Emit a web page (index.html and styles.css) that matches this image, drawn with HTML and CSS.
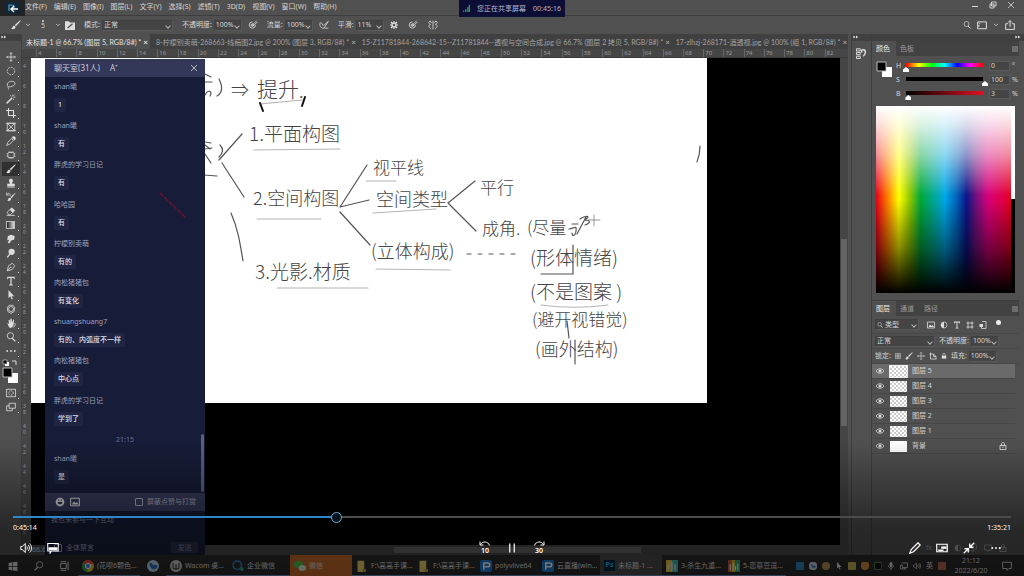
FILE: index.html
```html
<!DOCTYPE html>
<html lang="zh-CN">
<head>
<meta charset="utf-8">
<meta name="viewport" content="width=device-width, initial-scale=1">
<title>直播回放</title>
<link rel="stylesheet" href="styles.css">
</head>
<body>
<svg class="defs" aria-hidden="true">
  <symbol id="i-move" viewBox="0 0 16 16"><path d="M8 1v14M1 8h14M6 3l2-2 2 2M6 13l2 2 2-2M3 6L1 8l2 2M13 6l2 2-2 2"/></symbol>
  <symbol id="i-marquee" viewBox="0 0 16 16"><circle cx="8" cy="8" r="6" stroke-dasharray="3 1.5"/></symbol>
  <symbol id="i-lasso" viewBox="0 0 16 16"><path d="M4 11C-1 7 4 2 9 2c6 0 7 5 3 7-3 2-6 2-8 2-2 1 1 2 0 4"/></symbol>
  <symbol id="i-wand" viewBox="0 0 16 16"><path stroke-width="2.4" d="M1 15L10 6"/><path d="M11 1v3M15 5h-3M14 1l-2 2M7 2l1 2M13 9l-2-1"/></symbol>
  <symbol id="i-crop" viewBox="0 0 16 16"><path stroke-width="1.8" d="M4 0v12h12M0 4h12v12"/></symbol>
  <symbol id="i-frame" viewBox="0 0 16 16"><path d="M2 2h12v12H2zM2 2l12 12M14 2L2 14M0 2h16M0 14h16"/></symbol>
  <symbol id="i-dropper" viewBox="0 0 16 16"><path d="M1 15l2-5 6-6 3 3-6 6z"/><path class="fill" d="M9 2l5 5 2-4-3-3z"/></symbol>
  <symbol id="i-heal" viewBox="0 0 16 16"><rect x="3" y="4" width="10" height="8" rx="2"/><path d="M5 2v2M8 2v2M11 2v2M5 12v2M8 12v2M11 12v2M1 6h2M1 10h2M13 6h2M13 10h2"/></symbol>
  <symbol id="i-brush" viewBox="0 0 16 16"><path class="fill" d="M15 0L6 8l2 2 7-8zM5 9c-3 0-2 4-5 5 4 2 8 0 7-4z"/></symbol>
  <symbol id="i-stamp" viewBox="0 0 16 16"><path class="fill" d="M6 7C3 3 6 1 8 1s5 2 2 6v2h4v4H2V9h4zM2 14h12v1H2z"/></symbol>
  <symbol id="i-history" viewBox="0 0 16 16"><path class="fill" d="M15 1L7 8l2 2 6-8zM6 9c-3 0-2 4-4 5 3 1 7 0 6-4z"/><path d="M2 3c3-2 5 0 5 3M1 1v4h4"/></symbol>
  <symbol id="i-eraser" viewBox="0 0 16 16"><path d="M2 10l7-7 5 4-7 7H4zM1 15h13"/><path class="fill" d="M6 6l5 5 3-4-5-4z"/></symbol>
  <symbol id="i-smudge" viewBox="0 0 16 16"><path class="fill" d="M3 3l5-2 6 2-1 6-4 1-4 5-2-1 2-5-3 1z"/></symbol>
  <symbol id="i-dodge" viewBox="0 0 16 16"><circle class="fill" cx="9" cy="6" r="5"/><path stroke-width="2" d="M6 10l-4 5"/></symbol>
  <symbol id="i-pen" viewBox="0 0 16 16"><path d="M2 14l2-8 6-4 4 4-4 6zM2 14l6-6"/><circle class="fill" cx="8" cy="8" r="1"/></symbol>
  <symbol id="i-type" viewBox="0 0 16 16"><path class="fill" d="M2 1h12v4h-1l-1-2H9v10l2 1v1H5v-1l2-1V3H4L3 5H2z"/></symbol>
  <symbol id="i-arrow" viewBox="0 0 16 16"><path class="fill" d="M4 0v13l3-3 2 5 2-1-2-4h4z"/></symbol>
  <symbol id="i-shape" viewBox="0 0 16 16"><path d="M5 2h6l3 4-1 6-5 3-5-3-1-6z"/><circle cx="8" cy="8" r="4"/></symbol>
  <symbol id="i-hand" viewBox="0 0 16 16"><path class="fill" d="M2 8l3 1-1-6 2 0 1 4V1h2l1 6 2-5 1 1-1 9-4 4-3-1z"/><path d="M14 8c2 3 0 6-3 7"/></symbol>
  <symbol id="i-search" viewBox="0 0 16 16"><circle cx="7" cy="6" r="5"/><path stroke-width="2" d="M10 10l5 5"/></symbol>
  <symbol id="i-dots" viewBox="0 0 16 16"><circle class="fill" cx="2" cy="8" r="1.5"/><circle class="fill" cx="8" cy="8" r="1.5"/><circle class="fill" cx="14" cy="8" r="1.5"/></symbol>
  <symbol id="i-mask" viewBox="0 0 16 16"><rect x="1" y="2" width="14" height="12"/><circle cx="8" cy="8" r="3.5" stroke-dasharray="2 1"/></symbol>
  <symbol id="i-screens" viewBox="0 0 16 16"><path d="M5 2h10v8H5zM5 6H1v8h9v-4"/></symbol>
  <symbol id="i-down" viewBox="0 0 16 16"><path stroke-width="2" d="M3 5l5 5 5-5"/></symbol>
  <symbol id="i-brushbox" viewBox="0 0 16 16"><path class="fill" d="M0 2h6l2 2h8v12H0z"/><path stroke="#444" stroke-width="2" d="M4 13l8-7"/></symbol>
  <symbol id="i-pressure" viewBox="0 0 16 16"><path d="M12 8a5 5 0 1 1-5-5M6 9l8-8M6 9l3 0 6-6"/><circle cx="7" cy="8" r="2"/></symbol>
  <symbol id="i-airbrush" viewBox="0 0 16 16"><path d="M2 4c-2 5 1 10 6 9l7-11-8 7-4-5M9 13h6"/></symbol>
  <symbol id="i-gear" viewBox="0 0 16 16"><circle cx="8" cy="8" r="4" stroke-width="3"/><path stroke-width="2.4" d="M8 0v3M8 13v3M0 8h3M13 8h3M2 2l3 3M11 11l3 3M14 2l-3 3M5 11l-3 3"/></symbol>
  <symbol id="i-sym" viewBox="0 0 16 16"><path d="M8 1v14M5 2c-6 0-4 4-1 5-4 1-3 5 1 7M11 2c6 0 4 4 1 5 4 1 3 5-1 7M3 2l3 3M13 2l-3 3"/></symbol>
  <symbol id="i-workspace" viewBox="0 0 16 16"><path stroke-width="1.6" d="M1 3h14v11H1zM3 6h2M3 8v3"/></symbol>
  <symbol id="i-share" viewBox="0 0 16 16"><path stroke-width="1.6" d="M5 6H1v9h14V6h-4M8 11V1M5 4l3-3 3 3"/></symbol>
  <symbol id="i-min" viewBox="0 0 16 16"><path stroke-width="2" d="M2 11h12"/></symbol>
  <symbol id="i-restore" viewBox="0 0 16 16"><path stroke-width="1.8" d="M5 2h9v8H5zM2 6h8v8H2z"/></symbol>
  <symbol id="i-close" viewBox="0 0 16 16"><path stroke-width="1.6" d="M2 2l12 12M14 2L2 14"/></symbol>
  <symbol id="i-menu" viewBox="0 0 16 16"><path stroke-width="2" d="M2 4h12M2 8h12M2 12h12"/></symbol>
  <symbol id="i-chev" viewBox="0 0 16 16"><path class="fill" d="M1 4l6 4-6 4zM8 4l6 4-6 4z"/></symbol>
  <symbol id="i-panel" viewBox="0 0 16 16"><path d="M2 1h5v3H2zM2 6h5v3H2zM2 11h5v3H2z"/><path stroke-width="2" d="M10 2c5 0 5 5 1 9M9 2v4"/></symbol>
  <symbol id="i-image" viewBox="0 0 16 16"><path stroke-width="1.6" d="M1 2h14v12H1z"/><path class="fill" d="M3 12l3-5 3 3 2-2 3 4z"/></symbol>
  <symbol id="i-adjust" viewBox="0 0 16 16"><circle cx="8" cy="8" r="6"/><path class="fill" d="M8 2a6 6 0 0 0 0 12z"/></symbol>
  <symbol id="i-bounds" viewBox="0 0 16 16"><path stroke-width="1.6" d="M4 1v14M12 1v14M1 4h14M1 12h14"/></symbol>
  <symbol id="i-smart" viewBox="0 0 16 16"><path stroke-width="1.6" d="M6 1h8v14H5V8"/><path class="fill" d="M1 6h7v6H1z"/></symbol>
  <symbol id="i-checker" viewBox="0 0 16 16"><path d="M1 1h14v14H1zM1 6h14M1 10h14M6 1v14M10 1v14"/></symbol>
  <symbol id="i-artboard" viewBox="0 0 16 16"><path stroke-width="1.6" d="M3 1v13h12M1 4h8l5 5v5M9 4v5h5"/></symbol>
  <symbol id="i-lock" viewBox="0 0 16 16"><path stroke-width="1.8" d="M5 7V4c0-4 6-4 6 0v3"/><path class="fill" d="M2 7h12v8H2z"/></symbol>
  <symbol id="i-lockline" viewBox="0 0 16 16"><path stroke-width="1.8" d="M5 7V4c0-4 6-4 6 0v3M2 7h12v8H2zM8 9v3"/></symbol>
  <symbol id="i-eye" viewBox="0 0 16 16"><path stroke-width="1.6" d="M0 8c4-6 12-6 16 0-4 6-12 6-16 0z"/><circle class="fill" cx="8" cy="8" r="3"/></symbol>
  <symbol id="i-smile" viewBox="0 0 16 16"><circle class="fill" cx="8" cy="8" r="7"/><path fill="#2b2e4b" stroke="none" d="M4 8h8c-1 5-7 5-8 0zM5 4h2v2H5zM9 4h2v2H9z"/></symbol>
  <symbol id="i-volume" viewBox="0 0 16 16"><path d="M1 6h2l4-4v12l-4-4H1zM9 6c1 1 1 3 0 4M11 4c2 2 2 6 0 8M13 2c3 3 3 9 0 12"/></symbol>
  <symbol id="i-caption" viewBox="0 0 16 16"><path stroke-width="1.4" d="M1 2h14v10H6l-2 3v-3H1z"/><path class="fill" d="M2 7h12v4H2z"/></symbol>
  <symbol id="i-back" viewBox="0 0 24 12"><path stroke-width="2" d="M3 7c4-7 15-7 18 2M2 1v7h7"/></symbol>
  <symbol id="i-pause" viewBox="0 0 16 16"><path stroke-width="1.6" d="M5 2v12M11 2v12"/></symbol>
  <symbol id="i-pencil" viewBox="0 0 16 16"><path stroke-width="1.6" d="M1 15l2-5 9-9 3 3-9 9z"/></symbol>
  <symbol id="i-pip" viewBox="0 0 16 16"><path stroke-width="1.6" d="M1 3h14v10H1z"/><path class="fill" d="M7 6h7v3H7zM3 10h7v2H3z"/></symbol>
  <symbol id="i-shrink" viewBox="0 0 16 16"><path stroke-width="1.8" d="M15 1l-5 5M9 2v5h5M1 15l5-5M2 9h5v5"/></symbol>
  <symbol id="i-win" viewBox="0 0 16 16"><path class="fill" d="M1 3l6-1v6H1zM8 2l7-1v7H8zM1 9h6v6l-6-1zM8 9h7v7l-7-1z"/></symbol>
  <symbol id="i-taskview" viewBox="0 0 16 16"><path stroke-width="1.6" d="M1 4h9v8H1zM1 1h9M1 15h9M13 1v14"/></symbol>
  <symbol id="i-chrome" viewBox="0 0 16 16"><circle cx="8" cy="8" r="8" fill="#e8b92c"/><path fill="#dc4437" d="M8 8L1 4a8 8 0 0 1 14 0z"/><path fill="#2c9c52" d="M8 8L1 4a8 8 0 0 0 6 12z"/><circle cx="8" cy="8" r="3.6" fill="#4b86e4" stroke="#fff"/></symbol>
  <symbol id="i-bird" viewBox="0 0 16 16"><circle cx="8" cy="8" r="8" fill="#b9cfe6"/><path fill="#2b6fc0" d="M3 5c4-3 5 1 5 3 2-3 6-1 6 1-2 5-9 5-11-4z"/></symbol>
  <symbol id="i-wacom" viewBox="0 0 16 16"><circle cx="8" cy="8" r="8" fill="#c9c9c9"/><path stroke="#444" stroke-width="1.6" d="M4 4v5c0 4 4 4 4 0V5v4c0 4 4 4 4 0V4"/></symbol>
  <symbol id="i-wecom" viewBox="0 0 16 16"><circle cx="7" cy="7" r="5.6" stroke="#2e83cf" stroke-width="2"/><path stroke="#3bb08d" stroke-width="2" d="M11 12l4 2M13 10l2 2"/></symbol>
  <symbol id="i-wechat" viewBox="0 0 16 16"><ellipse cx="6" cy="6" rx="6" ry="5" fill="#49c34d"/><ellipse cx="11" cy="10.500" rx="5" ry="4" fill="#d8ead8"/></symbol>
  <symbol id="i-folder" viewBox="0 0 16 16"><path fill="#e8cf6f" d="M2 1h9v11h2v4H2z"/><path fill="#b59833" d="M9 12h4v4H9z"/></symbol>
  <symbol id="i-polyv" viewBox="0 0 16 16"><rect width="16" height="16" rx="3" fill="#1f7bd0"/><path stroke="#fff" stroke-width="2" d="M5 13V4h5c4 0 4 5 0 5H6"/></symbol>
  <symbol id="i-tiles" viewBox="0 0 16 16"><path fill="#e3c53e" d="M0 0h8v16H0z"/><path fill="#3fb6ae" d="M8 0h8v16H8z"/><path stroke="#eee" stroke-width="1.6" d="M3 14V7h3M8 14V3M12 14V6M3 4h2"/></symbol>
  <symbol id="i-tiles2" viewBox="0 0 16 16"><path fill="#c65b3b" d="M0 0h6v16H0z"/><path fill="#d7b83a" d="M5 0h5v16H5z"/><path fill="#33a872" d="M10 0h6v16h-6z"/><path stroke="#eee" stroke-width="1.6" d="M3 14V6M7 14V4M10 14V8M13 14V5"/></symbol>
  <symbol id="i-mic" viewBox="0 0 16 16"><rect class="fill" x="5" y="0" width="6" height="10" rx="3"/><path stroke-width="1.6" d="M3 7c0 7 10 7 10 0M8 12v4"/></symbol>
  <symbol id="i-net" viewBox="0 0 16 16"><path stroke-width="1.6" d="M3 2h12v9H6M9 11v3M5 14h8M1 6h4v8H1z"/></symbol>
  <symbol id="i-note" viewBox="0 0 16 16"><path stroke-width="1.4" d="M1 2h14v10h-4l-3 3v-3H1z"/></symbol>
</svg>

<div class="screen">
  <header class="menubar">
    <button class="back" aria-label="返回"><svg viewBox="0 0 24 16"><path fill="#10283a" d="M6 2h13v12H6z"/><path stroke="#4d9fc4" stroke-width="1.2" d="M9 11V5h3c3 0 3 3 0 3"/><path stroke="#fff" stroke-width="1.4" d="M18 9h-7M14 6l-3 3 3 3"/></svg></button>
    <nav class="menus">
      <button>文件(F)</button><button>编辑(E)</button><button>图像(I)</button><button>图层(L)</button><button>文字(Y)</button><button>选择(S)</button><button>滤镜(T)</button><button>3D(D)</button><button>视图(V)</button><button>窗口(W)</button><button>帮助(H)</button>
    </nav>
    <div class="winbtns">
      <button aria-label="最小化"><svg class="ic s"><use href="#i-min"/></svg></button>
      <button aria-label="还原"><svg class="ic s"><use href="#i-restore"/></svg></button>
      <button aria-label="关闭"><svg class="ic s"><use href="#i-close"/></svg></button>
    </div>
  </header>
  <div class="sharebar"><svg viewBox="0 0 10 10"><path d="M1 10V8M4 10V6M7 10V3M9 10V0" stroke="#43c26b" stroke-width="1.4"/></svg><span>您正在共享屏幕</span><span>00:45:16</span></div>

  <div class="options">
    <svg class="ic"><use href="#i-brush"/></svg><svg class="ic xs"><use href="#i-down"/></svg>
    <span class="brushsize"><i></i>5</span><svg class="ic xs"><use href="#i-down"/></svg>
    <svg class="ic"><use href="#i-brushbox"/></svg>
    <label class="lab">模式:<span class="sel w71"><select><option>正常</option></select></span></label>
    <label class="lab">不透明度:<span class="sel w28"><select><option>100%</option></select></span></label>
    <svg class="ic tight"><use href="#i-pressure"/></svg>
    <label class="lab">流量:<span class="sel w28"><select><option>100%</option></select></span></label>
    <svg class="ic tight"><use href="#i-airbrush"/></svg>
    <label class="lab">平滑:<span class="sel w28"><select><option>11%</option></select></span></label>
    <svg class="ic s tight"><use href="#i-gear"/></svg>
    <svg class="ic loose"><use href="#i-pressure"/></svg>
    <svg class="ic loose"><use href="#i-sym"/></svg>
    <div class="optright"><svg class="ic s"><use href="#i-search"/></svg><svg class="ic"><use href="#i-workspace"/></svg><svg class="ic xs"><use href="#i-down"/></svg><svg class="ic"><use href="#i-share"/></svg></div>
  </div>

  <main class="work">
    <aside class="tools">
      <div class="collapse"><svg class="ic xs"><use href="#i-chev"/></svg></div>
      <button aria-label="移动"><svg class="ic"><use href="#i-move"/></svg></button>
      <button aria-label="选框"><svg class="ic"><use href="#i-marquee"/></svg></button>
      <button aria-label="套索"><svg class="ic"><use href="#i-lasso"/></svg></button>
      <button aria-label="魔棒"><svg class="ic"><use href="#i-wand"/></svg></button>
      <button aria-label="裁剪"><svg class="ic"><use href="#i-crop"/></svg></button>
      <button aria-label="图框"><svg class="ic"><use href="#i-frame"/></svg></button>
      <button aria-label="吸管"><svg class="ic"><use href="#i-dropper"/></svg></button>
      <button aria-label="修复"><svg class="ic"><use href="#i-heal"/></svg></button>
      <button class="on" aria-label="画笔"><svg class="ic"><use href="#i-brush"/></svg></button>
      <button aria-label="图章"><svg class="ic"><use href="#i-stamp"/></svg></button>
      <button aria-label="历史画笔"><svg class="ic"><use href="#i-history"/></svg></button>
      <button aria-label="橡皮擦"><svg class="ic"><use href="#i-eraser"/></svg></button>
      <button aria-label="渐变"><span class="grad"></span></button>
      <button aria-label="涂抹"><svg class="ic"><use href="#i-smudge"/></svg></button>
      <button aria-label="减淡"><svg class="ic"><use href="#i-dodge"/></svg></button>
      <button aria-label="钢笔"><svg class="ic"><use href="#i-pen"/></svg></button>
      <button aria-label="文字"><svg class="ic"><use href="#i-type"/></svg></button>
      <button aria-label="路径选择"><svg class="ic"><use href="#i-arrow"/></svg></button>
      <button aria-label="形状"><svg class="ic"><use href="#i-shape"/></svg></button>
      <button aria-label="抓手"><svg class="ic"><use href="#i-hand"/></svg></button>
      <button aria-label="缩放"><svg class="ic"><use href="#i-search"/></svg></button>
      <button aria-label="更多"><svg class="ic"><use href="#i-dots"/></svg></button>
      <svg class="swatches" viewBox="0 0 18 28"><path fill="#fff" d="M3 4h4v4H3z"/><path fill="#111" stroke="#ddd" stroke-width=".6" d="M1 2h4v4H1z"/><path stroke="#ddd" d="M10 3h4v4"/><path fill="#fff" d="M6 15h10v10H6z"/><path fill="#000" stroke="#bbb" d="M1 10h9v9H1z"/></svg>
      <button aria-label="快速蒙版"><svg class="ic"><use href="#i-mask"/></svg></button>
      <button aria-label="屏幕模式"><svg class="ic"><use href="#i-screens"/></svg></button>
    </aside>

    <section class="doc">
      <div class="tabs">
        <button class="tab on">未标题-1 @ 66.7% (图层 5, RGB/8#) *<b>×</b></button>
        <button class="tab">8-柠檬别卖萌-268663-线稿图2.jpg @ 200% (图层 3, RGB/8#) *<b>×</b></button>
        <button class="tab">15-Z11781844-268642-15--Z11781844--透视与空间合成.jpg @ 66.7% (图层 2 拷贝 5, RGB/8#) *<b>×</b></button>
        <button class="tab">17-zlhzj-268171-酒透视.jpg @ 100% (组 1, RGB/8#) *<b>×</b></button>
      </div>
      <div class="ruler"><span>4</span><span>6</span><span>8</span><span>10</span><span>12</span><span>14</span><span>16</span><span>18</span><span>20</span><span>22</span><span>24</span><span>26</span><span>28</span><span>30</span><span>32</span><span>34</span><span>36</span><span>38</span><span>40</span><span>42</span><span>44</span><span>46</span><span>48</span><span>50</span><span>52</span><span>54</span><span>56</span><span>58</span><span>60</span><span>62</span><span>64</span><span>66</span><span>68</span><span>70</span><span>72</span><span>74</span><span>76</span><span>78</span><span>80</span><span>82</span></div>
      <div class="view">
        <div class="vruler"><span>4</span><span>6</span><span>8</span><span>10</span><span>12</span><span>14</span><span>16</span><span>18</span><span>20</span><span>22</span><span>24</span><span>26</span><span>28</span><span>30</span><span>32</span><span>34</span><span>36</span><span>38</span><span>40</span><span>42</span><span>44</span><span>46</span><span>48</span><span>50</span></div>
        <div class="stage">
          <svg class="art" viewBox="31 58 676 345" width="676" height="345">
            <g class="ink">
              <path d="M219 79c4 8 3 14-2 17M205 74l6 3M205 82h7M205 95c3-6 8-4 5 1M205 142l6 1M205 149l7-1M205 154l6 9M204 175l13 1M220 145c4 4 3 8-1 12M205 145l5 4"/>
              <path d="M219 160l23-26M222 163l22 34M231 213c7 16 9 30 12 48"/>
              <path d="M340 207l27-42M340 207l29-7M340 212l30 33M448 203l27-22M448 203l28 28"/>
              <path stroke-dasharray="4 7" d="M467 254h52"/>
              <path class="faint" d="M260 104l42-4M254 150l86-1M257 219h64M366 181h30M373 213l63-4M376 269l74 1M277 288h91M541 305c22 3 44 3 67 0"/>
              <path d="M541 274h32M573 245v29M567 321l2 17M575 340v24M700 146c0 5-1 11-3 16"/>
              <path class="dark" d="M260 103l3 8M305 97l-3 9"/>
              <path d="M572 224h6M569 229c6-1 8-4 7 2s-4 5-4 2M577 234l9-17M580 219c8-5 11-2 4 1 7 0 7 3 1 5"/>
              <path stroke-width=".6" d="M588 220h12M594 215v11"/>
            </g>
            <g class="hand">
              <text x="231" y="97">⇒</text><text x="257" y="97" class="l">提升</text><text x="299" y="98">.</text>
              <text x="249" y="141" class="n">1.平面构图</text>
              <text x="253" y="205">2.空间构图</text>
              <text x="255" y="279" class="n">3.光影.材质</text>
              <text x="373" y="174" class="m">视平线</text>
              <text x="376" y="206">空间类型</text>
              <text x="371" y="258">(立体构成)</text>
              <text x="480" y="194" class="m">平行</text>
              <text x="482" y="235" class="m">成角.</text>
              <text x="527" y="234" class="m">(尽量</text>
              <text x="530" y="265" class="n">(形体情绪)</text>
              <text x="530" y="299" class="n">(不是图案 )</text>
              <text x="532" y="326" class="m">(避开视错觉)</text>
              <text x="535" y="356">(画外结构)</text>
            </g>
          </svg>
          <div class="chat">
            <div class="chead"><span>聊天室(31人)</span><span>A⁺</span><button aria-label="关闭聊天室"><svg class="ic s"><use href="#i-close"/></svg></button></div>
            <div class="cbody">
              <div class="msg"><span>shan曦</span><p>1</p></div>
              <div class="msg"><span>shan曦</span><p>有</p></div>
              <div class="msg"><span>胖虎的学习日记</span><p>有</p></div>
              <div class="msg"><span>哈哈园</span><p>有</p></div>
              <div class="msg"><span>柠檬别卖萌</span><p>有的</p></div>
              <div class="msg"><span>肉松猪猪包</span><p>有变化</p></div>
              <div class="msg"><span>shuangshuang7</span><p>有的、内弧度不一样</p></div>
              <div class="msg"><span>肉松猪猪包</span><p>中心点</p></div>
              <div class="msg"><span>胖虎的学习日记</span><p>学到了</p></div>
              <time>21:15</time>
              <div class="msg"><span>shan曦</span><p>是</p></div>
              <i class="thumb"></i>
              <svg class="redline" viewBox="0 0 30 28"><path stroke="#5c1430" stroke-width="1.8" stroke-dasharray="5 1" d="M1 1l26 25"/></svg>
            </div>
            <div class="ctools"><svg class="ic"><use href="#i-smile"/></svg><svg class="ic"><use href="#i-image"/></svg><label><input type="checkbox">屏蔽点赞与打赏</label></div>
            <textarea placeholder="我也来参与一下互动" aria-label="消息"></textarea>
            <div class="cfoot"><label><input type="checkbox">全体禁言</label><button>发送</button></div>
          </div>
        </div>
        <div class="vscroll"><i></i></div>
      </div>
      <div class="status"><span>66.67%</span><i></i></div>
    </section>

    <aside class="rail"><div class="collapse"><svg class="ic xs"><use href="#i-chev"/></svg></div><svg class="ic big"><use href="#i-panel"/></svg></aside>

    <aside class="panels">
      <div class="collapse end"><svg class="ic xs"><use href="#i-chev"/></svg></div>
      <section class="panel color">
        <div class="ptabs"><button class="on">颜色</button><button>色板</button><svg class="ic s"><use href="#i-menu"/></svg></div>
        <div class="hsb">
          <svg class="chips" viewBox="0 0 18 18"><path fill="#fff" d="M6 6h10v10H6z"/><path fill="#000" stroke="#bbb" d="M1 1h9v9H1z"/></svg>
          <div class="sliders">
            <label><span>H</span><input type="range" class="h" min="0" max="360" value="0"><output>0</output><em>°</em></label>
            <label><span>S</span><input type="range" class="sat" min="0" max="100" value="100"><output>100</output><em>%</em></label>
            <label><span>B</span><input type="range" class="bri" min="0" max="100" value="3"><output>3</output><em>%</em></label>
          </div>
        </div>
        <div class="spectrum"><div class="hue"></div><div class="bw"></div></div>
      </section>
      <section class="panel layers">
        <div class="ptabs"><button class="on">图层</button><button>通道</button><button>路径</button><svg class="ic s"><use href="#i-menu"/></svg></div>
        <div class="lrow filter"><span class="sel w44 find"><svg class="ic xs"><use href="#i-search"/></svg><select aria-label="筛选"><option>类型</option></select></span><svg class="ic s"><use href="#i-image"/></svg><svg class="ic s"><use href="#i-adjust"/></svg><svg class="ic s"><use href="#i-type"/></svg><svg class="ic s"><use href="#i-bounds"/></svg><svg class="ic s"><use href="#i-smart"/></svg><i class="dot"></i></div>
        <div class="lrow"><span class="sel w60"><select aria-label="混合模式"><option>正常</option></select></span><label class="plab">不透明度:<span class="sel w28"><select><option>100%</option></select></span></label></div>
        <div class="lrow locks"><span>锁定:</span><svg class="ic xs"><use href="#i-checker"/></svg><svg class="ic s"><use href="#i-brush"/></svg><svg class="ic s"><use href="#i-move"/></svg><svg class="ic s"><use href="#i-artboard"/></svg><svg class="ic xs"><use href="#i-lock"/></svg><label class="plab">填充:<span class="sel w28"><select><option>100%</option></select></span></label></div>
        <ul>
          <li class="on"><svg class="ic s"><use href="#i-eye"/></svg><i></i>图层 5</li>
          <li><svg class="ic s"><use href="#i-eye"/></svg><i></i>图层 4</li>
          <li><svg class="ic s"><use href="#i-eye"/></svg><i></i>图层 3</li>
          <li><svg class="ic s"><use href="#i-eye"/></svg><i></i>图层 2</li>
          <li><svg class="ic s"><use href="#i-eye"/></svg><i></i>图层 1</li>
          <li class="bg"><svg class="ic s"><use href="#i-eye"/></svg><i></i>背景<svg class="ic s lockend"><use href="#i-lockline"/></svg></li>
        </ul>
        <div class="lfoot"><span>fx</span><svg class="ic s"><use href="#i-mask"/></svg><svg class="ic s"><use href="#i-adjust"/></svg><svg class="ic s"><use href="#i-screens"/></svg><svg class="ic s"><use href="#i-note"/></svg><svg class="ic s"><use href="#i-lockline"/></svg></div>
      </section>
    </aside>
  </main>

  <footer class="taskbar">
    <button class="tb sys" aria-label="开始"><svg class="ic"><use href="#i-win"/></svg></button>
    <button class="tb sys flip" aria-label="搜索"><svg class="ic"><use href="#i-search"/></svg></button>
    <button class="tb sys" aria-label="任务视图"><svg class="ic"><use href="#i-taskview"/></svg></button>
    <button class="tb run"><svg class="ic app"><use href="#i-chrome"/></svg>(花呗6颗色...</button>
    <button class="tb sys" aria-label="浏览器"><svg class="ic app"><use href="#i-bird"/></svg></button>
    <button class="tb run"><svg class="ic app"><use href="#i-wacom"/></svg>Wacom 桌...</button>
    <button class="tb run"><svg class="ic app"><use href="#i-wecom"/></svg>企业微信</button>
    <button class="tb hot"><svg class="ic app"><use href="#i-wechat"/></svg>微信</button>
    <button class="tb run"><svg class="ic app"><use href="#i-folder"/></svg>F:\高高手课...</button>
    <button class="tb run"><svg class="ic app"><use href="#i-folder"/></svg>F:\高高手课...</button>
    <button class="tb run"><svg class="ic app"><use href="#i-polyv"/></svg>polyvlive64</button>
    <button class="tb run"><svg class="ic app"><use href="#i-polyv"/></svg>云直播(win...</button>
    <button class="tb run cur"><span class="ps">Ps</span>未标题-1 ...</button>
    <button class="tb run"><svg class="ic app"><use href="#i-tiles"/></svg>3-杀生九重...</button>
    <button class="tb run"><svg class="ic app"><use href="#i-tiles2"/></svg>5-恋慕豆逗...</button>
    <div class="tray">
      <i class="c1"></i><svg class="ic s"><use href="#i-bird"/></svg><i class="c2"></i><svg class="ic s"><use href="#i-arrow"/></svg><i class="c3"></i><i class="c4"></i><i class="c5"></i><svg class="ic s"><use href="#i-mic"/></svg><svg class="ic s"><use href="#i-net"/></svg><svg class="ic s"><use href="#i-volume"/></svg><span>英</span><i class="c6"></i>
    </div>
    <div class="clock"><span>21:12</span><span>2022/6/20</span></div>
    <button class="tb sys" aria-label="通知"><svg class="ic"><use href="#i-note"/></svg></button>
  </footer>

  <div class="player">
    <input type="range" class="seek" aria-label="播放进度" min="0" max="8435" value="2714">
    <div class="times"><span>0:45:14</span><span>1:35:21</span></div>
    <div class="controls">
      <div class="grp"><button aria-label="音量"><svg class="ic big"><use href="#i-volume"/></svg></button><button aria-label="字幕"><svg class="ic big"><use href="#i-caption"/></svg></button></div>
      <div class="grp mid"><button class="skip" aria-label="后退10秒"><svg class="ic"><use href="#i-back"/></svg>10</button><button aria-label="暂停"><svg class="ic big"><use href="#i-pause"/></svg></button><button class="skip fwd" aria-label="前进30秒"><svg class="ic"><use href="#i-back"/></svg>30</button></div>
      <div class="grp right"><button aria-label="编辑"><svg class="ic big"><use href="#i-pencil"/></svg></button><button aria-label="小窗"><svg class="ic big"><use href="#i-pip"/></svg></button><button aria-label="退出全屏"><svg class="ic big"><use href="#i-shrink"/></svg></button><button aria-label="更多"><svg class="ic"><use href="#i-dots"/></svg></button></div>
    </div>
  </div>
</div>
</body>
</html>
```
FILE: styles.css
```css
* { box-sizing: border-box; }
body { margin: 0; background: #000; }
.defs { position: absolute; width: 0; height: 0; }
.screen {
  position: relative; display: flex; flex-direction: column; min-height: 100vh; overflow: hidden;
  background: #505050; color: #d4d4d4;
  font: 7px/10px "Noto Sans", "Noto Sans CJK SC", sans-serif;
}
button, input, select, textarea { margin: 0; padding: 0; border: 0; background: none; color: inherit; font: inherit; border-radius: 0; }
select { appearance: none; width: 100%; outline: 0; }
svg { fill: none; display: block; flex: none; }
.ic { width: 10px; height: 10px; stroke: currentColor; stroke-width: 1.3; color: #dcdcdc; }
.ic.s { width: 8px; height: 8px; }
.ic.xs { width: 6px; height: 6px; }
.ic.big { width: 12px; height: 12px; }
.fill { fill: currentColor; stroke: none; }

/* menu bar */
.menubar { display: flex; align-items: center; height: 16px; border-bottom: 1px solid #3d3d3d; }
.back { width: 25px; height: 16px; background: #222; }
.back svg { width: 24px; height: 16px; }
.menus { display: flex; gap: 7px; flex: 1; line-height: 12px; padding-bottom: 2px; }
.winbtns { display: flex; gap: 10px; padding-right: 9px; padding-bottom: 5px; }
.sharebar {
  position: absolute; left: 50%; top: 0; transform: translateX(-53px); width: 106px; height: 17px;
  display: flex; align-items: center; justify-content: center; gap: 7px; background: #0c0e36; color: #b5b8cc;
}
.sharebar svg { width: 7px; height: 7px; }

/* options bar */
.options { display: flex; align-items: center; gap: 4px; height: 18px; padding: 0 9px 0 11px; }
.brushsize { display: flex; flex-direction: column; align-items: center; line-height: 8px; width: 16px; }
.brushsize i { width: 2px; height: 2px; background: #ddd; border-radius: 50%; }
.lab { display: flex; align-items: center; gap: 2px; margin-left: 5px; white-space: nowrap; }
.plab { display: flex; align-items: center; gap: 2px; white-space: nowrap; }
.sel { position: relative; display: flex; align-items: center; height: 11px; padding-left: 1px; background: #444; border: 1px solid #5c5c5c; border-color: #404040 #5a5a5a #5a5a5a #404040; }
.sel::after { content: ""; position: absolute; right: 2px; top: 3px; width: 3px; height: 3px; border: solid #b5b5b5; border-width: 0 1px 1px 0; transform: rotate(45deg); }
.w28 { width: 28px; }
.w44 { width: 44px; }
.w60 { width: 60px; }
.w71 { width: 71px; }
.tight { margin-left: 2px; }
.loose { margin-left: 6px; }
.optright { display: flex; align-items: center; gap: 6px; margin-left: auto; }

/* workspace */
.work { display: flex; flex: 1; }
.collapse { height: 7px; background: #404040; padding-left: 1px; }
.collapse.end { display: flex; justify-content: flex-end; padding-right: 3px; }
.tools { width: 22px; display: flex; flex-direction: column; align-items: center; border-right: 1px solid #404040; }
.tools .collapse { width: 100%; margin-bottom: 9px; }
.tools button { position: relative; display: flex; align-items: center; justify-content: center; width: 18px; height: 14px; }
.tools button::after { content: ""; position: absolute; right: 1px; bottom: 1px; width: 1px; height: 1px; background: #ccc; }
.tools .on { background: #303030; }
.grad { width: 9px; height: 8px; border: 1px solid #bbb; background: linear-gradient(90deg, #222, #ddd); }
.swatches { width: 18px; height: 28px; }
.doc { flex: 1; min-width: 0; display: flex; flex-direction: column; }
.tabs { display: flex; height: 15px; overflow: hidden; background: #404040; color: #a0a0a0; font-family: Lato, "Noto Sans CJK SC", sans-serif; }
.tab { flex: none; display: flex; align-items: center; gap: 2px; padding: 0 2px 0 4px; white-space: nowrap; }
.tab b { font-size: 8px; }
.tab.on { margin-right: 2px; background: #505050; color: #e2e2e2; }
.ruler { display: flex; height: 9px; padding: 0 3px 0 14px; background: #464646; border-bottom: 1px solid #3a3a3a; font-size: 6px; line-height: 9px; color: #999; }
.ruler span { flex: 1 1 0; min-width: 0; padding-left: 1px; border-left: 1px solid #666; }
.view { display: flex; flex: 1; }
.vruler { display: flex; flex-direction: column; width: 9px; padding-top: 3px; background: #464646; font-size: 5px; line-height: 6px; color: #999; }
.vruler span { flex: 1; width: 3px; margin-left: 1px; overflow-wrap: anywhere; padding-top: 2px; max-height: 20px; }
.stage { position: relative; flex: 1; min-width: 0; background: #000; }
.art { background: #fff; }
.ink { stroke: #555; stroke-width: 1.2; stroke-linecap: round; }
.faint { stroke: #b4b4b4; }
.dark { stroke: #111; stroke-width: 2; }
.hand { fill: #444; font-family: "Noto Sans CJK SC", sans-serif; font-weight: 300; font-size: 18px; }
.hand .l { font-size: 21px; }
.hand .n { font-size: 19px; }
.hand .m { font-size: 17px; }
.vscroll { width: 8px; background: #454545; padding: 181px 1px 0; }
.vscroll i { display: block; height: 187px; background: #636363; }
.status { display: flex; height: 10px; background: #484848; padding-left: 10px; }
.status span { width: 362px; }
.status i { width: 247px; background: #666; margin: 2px 0; }

/* chat window */
.chat { position: absolute; left: 14px; top: 1px; bottom: -10px; width: 160px; display: flex; flex-direction: column; background: #171c38; color: #c5c8da; }
.chead { display: flex; align-items: center; gap: 10px; height: 18px; padding: 0 7px 0 9px; background: #343858; font-size: 8px; }
.chead button { margin-left: auto; }
.cbody { position: relative; flex: 1; display: flex; flex-direction: column; justify-content: space-between; padding: 5px 9px 9px; color: #9da3bd; }
.msg { display: flex; flex-direction: column; align-items: flex-start; gap: 6px; }
.msg p { margin: 0; padding: 2px 4px; background: #1f2542; color: #dcdfea; border-radius: 2px; min-width: 12px; font-weight: 500; }
.cbody time { align-self: center; color: #66779f; }
.thumb { position: absolute; right: 1px; bottom: 1px; width: 3px; height: 58px; background: #5a5f7c; border-radius: 2px; }
.redline { position: absolute; left: 114px; top: 115px; width: 30px; height: 28px; }
.ctools { display: flex; align-items: center; gap: 5px; height: 18px; padding: 0 9px 0 10px; background: #373a5c; color: #a5a8bc; }
.ctools label, .cfoot label { display: flex; align-items: center; gap: 4px; }
.ctools label { margin-left: auto; }
.chat input { appearance: none; width: 8px; height: 8px; border: 1px solid #a5a8bc; border-radius: 1px; }
.chat textarea { height: 29px; padding: 4px 6px; resize: none; outline: 0; }
.chat textarea::placeholder { color: #8a8fa8; }
.cfoot { display: flex; align-items: center; justify-content: space-between; height: 15px; padding: 0 7px 0 9px; color: #9a9db0; }
.cfoot button { width: 27px; height: 11px; background: #2a2e4a; color: #7a7f98; }

/* right side panels */
.rail { width: 21px; margin-left: 3px; border-right: 1px solid #3d3d3d; border-left: 1px solid #3d3d3d; }
.rail .big { margin: 7px 3px; }
.panels { width: 152px; display: flex; flex-direction: column; }
.panel { margin-right: 5px; }
.ptabs { display: flex; align-items: stretch; height: 15px; background: #424242; color: #999; }
.ptabs button { padding: 0 4px; min-width: 24px; text-align: left; }
.ptabs .on { background: #505050; color: #eee; }
.ptabs svg { margin: 4px 0 0 auto; color: #999; }
.hsb { display: flex; gap: 2px; padding: 5px 0 0 4px; }
.chips { width: 18px; height: 18px; }
.sliders { flex: 1; min-width: 0; }
.sliders label { display: flex; align-items: flex-start; height: 14px; line-height: 10px; }
.sliders span { width: 7px; }
.sliders input { appearance: none; flex: 1; width: 0; height: 11px; background: no-repeat 3px 2px / 77px 4px; }
.sliders input::-webkit-slider-thumb { appearance: none; width: 6px; height: 5px; margin-top: 6px; background: #fff; clip-path: polygon(50% 0, 100% 50%, 100% 100%, 0 100%, 0 50%); }
.sliders .h { background-image: linear-gradient(90deg, #f00, #ff0, #0f0, #0ff, #00f, #f0f, #f00); }
.sliders .sat { background-image: linear-gradient(90deg, #000, #080000); }
.sliders .bri { background-image: linear-gradient(90deg, #000, #e01020); }
.sliders output { width: 21px; height: 10px; padding-left: 1px; margin-left: 1px; background: #444; border: 1px solid #5a5a5a; line-height: 8px; }
.sliders em { width: 9px; padding-left: 2px; font-style: normal; }
.spectrum { display: flex; height: 187px; margin: 3px 4px 7px; }
.hue {
  flex: 1;
  background:
    linear-gradient(180deg, #fff 0, rgba(255,255,255,.85) 10%, rgba(255,255,255,.55) 26%, rgba(255,255,255,0) 48%, rgba(0,0,0,0) 50%, rgba(0,0,0,.45) 76%, #000 100%),
    linear-gradient(90deg, #e3001b 0, #f60 7%, #ff0 17%, #8fc800 25%, #00a838 33%, #00a88c 42%, #00a8e8 51%, #0060b8 60%, #0c1488 67%, #70107c 74%, #d8007c 83%, #e0004c 93%, #e3001b 100%);
}
.bw { width: 4px; background: linear-gradient(#fff 50%, #000 50%); }
.color { border-bottom: 1px solid #3d3d3d; }
.layers { flex: 1; display: flex; flex-direction: column; }
.lrow { display: flex; align-items: center; height: 15px; padding-left: 3px; gap: 4px; border-bottom: 1px solid #484848; }
.filter { gap: 5px; height: 18px; }
.find { gap: 2px; margin-right: 3px; }
.dot { width: 5px; height: 5px; border-radius: 50%; background: #eee; margin: 0 0 5px 4px; }
.layers ul { list-style: none; margin: 0; padding: 0 4px 0 0; }
.layers li { display: flex; align-items: center; gap: 5px; height: 15px; padding: 0 8px 0 4px; border-bottom: 1px solid #464646; }
.layers li.on { background: #6a6a6a; }
.layers li i { width: 17px; height: 11px; margin: 0 0 0 1px; background: repeating-conic-gradient(#ccc 0 25%, #fff 0 50%) 0 0 / 4px 4px; }
.layers li.on i { outline: 1px solid #eee; }
.layers li.bg i { background: #fff; }
.lockend { margin-left: auto; }
.lfoot { display: flex; align-items: center; justify-content: flex-end; gap: 7px; margin-top: auto; height: 15px; opacity: .6; padding-right: 12px; }

/* taskbar */
.taskbar { display: flex; height: 21px; background: #2a2a2a; color: #dcdcdc; }
.tb { flex: 0 1 62px; min-width: 0; display: flex; align-items: center; gap: 3px; padding: 0 4px; white-space: nowrap; overflow: hidden; }
.tb.sys { flex: 0 0 26px; justify-content: center; padding: 0; }
.flip svg { transform: scaleX(-1); }
.run { box-shadow: inset 0 -1px #6a8fc4; }
.hot { background: #c46a2a; }
.cur { background: #4a4a4a; }
.app { width: 12px; height: 12px; stroke: none; }
.ps { width: 11px; height: 11px; background: #00283a; color: #3ab5e8; text-align: center; font-weight: 700; }
.tray { display: flex; align-items: center; gap: 5px; margin-left: auto; padding-right: 6px; }
.tray i { width: 8px; height: 8px; border-radius: 1px; }
.tray .c1 { background: #2e86c4; }
.tray .c2 { background: #b18f52; border-radius: 50%; }
.tray .c3 { background: #c4b25a; }
.tray .c4 { background: #d08a3c; border-radius: 2px 2px 4px 4px; }
.tray .c5 { background: #111; border: 1px solid #4f7a3b; }
.tray .c6 { background: #b4644a; }
.clock { display: flex; flex-direction: column; align-items: center; justify-content: center; width: 38px; line-height: 10px; }
.taskbar .sys:last-child { flex-basis: 34px; }

/* player overlay */
.player {
  position: absolute; left: 0; right: 0; bottom: 0; height: 136px; padding: 71px 13px 16px; display: flex; flex-direction: column; color: #fff;
  background: linear-gradient(rgba(0,0,0,0), rgba(0,0,0,.5) 65%, rgba(0,0,0,.55));
}
.seek { appearance: none; width: 100%; height: 12px; background: linear-gradient(90deg, #2f86c6 32.5%, #4c4c4c 32.5%) no-repeat 0 5px / 100% 2px; }
.seek::-webkit-slider-thumb { appearance: none; width: 11px; height: 11px; border: 1px solid #64aee0; border-radius: 50%; background: #08121a; }
.times { display: flex; justify-content: space-between; height: 12px; }
.controls { display: grid; grid-template-columns: 1fr auto 1fr; align-items: center; height: 25px; }
.grp { display: flex; gap: 7px; }
.grp button { width: 20px; height: 16px; display: flex; align-items: center; justify-content: center; }
.grp .ic { color: #fff; }
.grp:first-child { padding-left: 3px; }
.right { justify-content: flex-end; padding-right: 5px; }
.grp .skip { flex-direction: column; font-size: 7px; line-height: 7px; font-weight: 600; }
.skip .ic { width: 12px; height: 6px; }
.fwd .ic { transform: scaleX(-1); }
```
